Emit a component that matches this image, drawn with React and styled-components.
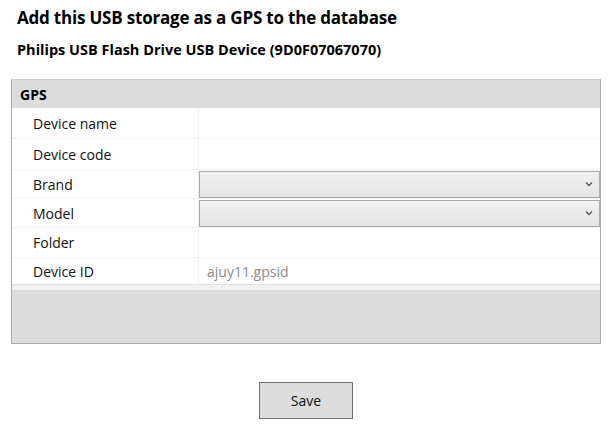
import React from "react";
import styled, { createGlobalStyle } from "styled-components";

const GlobalStyle = createGlobalStyle`
  body {
    margin: 0;
    background: #fff;
    font-family: "Open Sans", "Noto Sans", sans-serif;
    color: #000;
  }
`;

const fields = [
  { label: "Device name", h: 31 },
  { label: "Device code", h: 31 },
  { label: "Brand", h: 29, select: true },
  { label: "Model", h: 29, select: true },
  { label: "Folder", h: 30 },
  { label: "Device ID", h: 27, value: "ajuy11.gpsid", last: true },
];

function Chevron() {
  return (
    <svg width="8" height="6" viewBox="0 0 8 6">
      <path d="M1 1.5 L4 4.5 L7 1.5" fill="none" stroke="#555" strokeWidth="1.3" />
    </svg>
  );
}

function App() {
  return (
    <Page>
      <GlobalStyle />
      <Title>Add this USB storage as a GPS to the database</Title>
      <Subtitle>Philips USB Flash Drive USB Device (9D0F07067070)</Subtitle>
      <Panel>
        <Header>GPS</Header>
        {fields.map((f) => (
          <Row key={f.label} $h={f.h} $last={f.last}>
            <Label>{f.label}</Label>
            <Cell>
              {f.select ? (
                <Select>
                  <Chevron />
                </Select>
              ) : (
                <Value>{f.value}</Value>
              )}
            </Cell>
          </Row>
        ))}
        <Gap />
        <Filler />
      </Panel>
      <Footer>
        <SaveButton>Save</SaveButton>
      </Footer>
    </Page>
  );
}

const Page = styled.div`
  padding: 7px 7px 0 11px;
`;
const Title = styled.h1`
  margin: 0 0 0 6px;
  font-size: 17px;
  font-weight: 700;
  line-height: 22px;
  letter-spacing: -0.2px;
`;
const Subtitle = styled.h2`
  margin: 11px 0 0 6px;
  font-size: 14.5px;
  font-weight: 700;
  line-height: 20px;
`;
const Panel = styled.section`
  margin-top: 19px;
  border: 1px solid #a9a9a9;
  border-top-color: #d0d0d0;
`;
const Header = styled.div`
  height: 28px;
  background: #dcdcdc;
  display: flex;
  align-items: center;
  padding-left: 8px;
  font-size: 14px;
  font-weight: 700;
`;
const Row = styled.div`
  display: grid;
  grid-template-columns: 187px 1fr;
  height: ${(p) => p.$h}px;
  box-sizing: border-box;
  border-bottom: 1px solid ${(p) => (p.$last ? "#e2e2e2" : "#f0f0f0")};
`;
const Label = styled.div`
  display: flex;
  align-items: center;
  padding-left: 21px;
  font-size: 14px;
  color: #111;
  border-right: 1px solid #f0f0f0;
`;
const Cell = styled.div`
  display: flex;
  align-items: center;
`;
const Value = styled.span`
  padding-left: 8px;
  font-size: 14px;
  color: #8a8a8a;
`;
const Select = styled.div`
  box-sizing: border-box;
  height: 27px;
  width: 100%;
  border: 1px solid #acacac;
  background: linear-gradient(#f1f1f1, #e4e4e4);
  display: flex;
  align-items: center;
  justify-content: flex-end;
  padding-right: 6px;
`;
const Gap = styled.div`
  height: 5px;
  background: #f0f0f0;
`;
const Filler = styled.div`
  height: 53px;
  background: #dcdcdc;
`;
const Footer = styled.div`
  display: flex;
  justify-content: center;
  padding: 38px 0 0 0;
`;
const SaveButton = styled.button`
  width: 94px;
  height: 37px;
  background: #dddddd;
  border: 1px solid #707070;
  font-family: inherit;
  font-size: 14px;
  color: #111;
`;

export default App;
